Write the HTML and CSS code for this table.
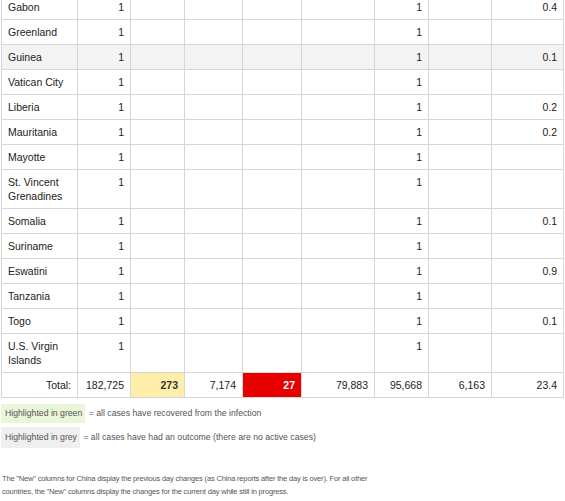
FILE: index.html
```html
<!DOCTYPE html>
<html>
<head>
<meta charset="utf-8">
<link rel="stylesheet" href="styles.css">
</head>
<body>
<table class="stats">
  <colgroup>
    <col class="c-name"><col class="c-total"><col class="c-new"><col class="c-deaths"><col class="c-newd"><col class="c-rec"><col class="c-act"><col class="c-ser"><col class="c-pm">
  </colgroup>
  <tbody>
    <tr><td class="name">Gabon</td><td>1</td><td></td><td></td><td></td><td></td><td>1</td><td></td><td>0.4</td></tr>
    <tr><td class="name">Greenland</td><td>1</td><td></td><td></td><td></td><td></td><td>1</td><td></td><td></td></tr>
    <tr class="grey"><td class="name">Guinea</td><td>1</td><td></td><td></td><td></td><td></td><td>1</td><td></td><td>0.1</td></tr>
    <tr><td class="name">Vatican City</td><td>1</td><td></td><td></td><td></td><td></td><td>1</td><td></td><td></td></tr>
    <tr><td class="name">Liberia</td><td>1</td><td></td><td></td><td></td><td></td><td>1</td><td></td><td>0.2</td></tr>
    <tr><td class="name">Mauritania</td><td>1</td><td></td><td></td><td></td><td></td><td>1</td><td></td><td>0.2</td></tr>
    <tr><td class="name">Mayotte</td><td>1</td><td></td><td></td><td></td><td></td><td>1</td><td></td><td></td></tr>
    <tr><td class="name">St. Vincent Grenadines</td><td>1</td><td></td><td></td><td></td><td></td><td>1</td><td></td><td></td></tr>
    <tr><td class="name">Somalia</td><td>1</td><td></td><td></td><td></td><td></td><td>1</td><td></td><td>0.1</td></tr>
    <tr><td class="name">Suriname</td><td>1</td><td></td><td></td><td></td><td></td><td>1</td><td></td><td></td></tr>
    <tr><td class="name">Eswatini</td><td>1</td><td></td><td></td><td></td><td></td><td>1</td><td></td><td>0.9</td></tr>
    <tr><td class="name">Tanzania</td><td>1</td><td></td><td></td><td></td><td></td><td>1</td><td></td><td></td></tr>
    <tr><td class="name">Togo</td><td>1</td><td></td><td></td><td></td><td></td><td>1</td><td></td><td>0.1</td></tr>
    <tr><td class="name">U.S. Virgin Islands</td><td>1</td><td></td><td></td><td></td><td></td><td>1</td><td></td><td></td></tr>
  </tbody>
  <tfoot>
    <tr class="total"><td class="label">Total:</td><td>182,725</td><td class="new-cases">273</td><td>7,174</td><td class="new-deaths">27</td><td>79,883</td><td>95,668</td><td>6,163</td><td>23.4</td></tr>
  </tfoot>
</table>

<div class="legend">
  <p class="legend-row"><span class="chip chip-green">Highlighted in green</span> = all cases have recovered from the infection</p>
  <p class="legend-row"><span class="chip chip-grey">Highlighted in grey</span> = all cases have had an outcome (there are no active cases)</p>
</div>

<p class="note">The "New" columns for China display the previous day changes (as China reports after the day is over). For all other countries, the "New" columns display the changes for the current day while still in progress.</p>
</body>
</html>
```

FILE: styles.css
```css
html, body {
  margin: 0;
  padding: 0;
  background: #ffffff;
}

body {
  font-family: "Liberation Sans", Arial, sans-serif;
  color: #333333;
  overflow: hidden;
}

.stats {
  border-collapse: collapse;
  table-layout: fixed;
  width: 563px;
  margin: -6px 0 0 1px;
  font-size: 10.5px;
  line-height: 14px;
  color: #222222;
}

.c-name { width: 76px; }
.c-total { width: 53px; }
.c-new { width: 54px; }
.c-deaths { width: 58px; }
.c-newd { width: 59px; }
.c-rec { width: 73px; }
.c-act { width: 54px; }
.c-ser { width: 63px; }
.c-pm { width: 72px; }

.stats td {
  border: 1px solid #d6d6d6;
  padding: 5px 6px 5px 6px;
  text-align: right;
  vertical-align: top;
}

.stats td.name {
  text-align: left;
  color: #222222;
}

.stats tr.grey td {
  background: #f3f3f3;
}

.stats tr.total td {
  vertical-align: middle;
}

.stats td.label {
  text-align: right;
}

.stats td.new-cases {
  background: #ffeeaa;
  font-weight: bold;
  color: #333333;
}

.stats td.new-deaths {
  background: #e60000;
  color: #ffffff;
  font-weight: bold;
}

.legend {
  margin-top: 6px;
  font-size: 8.7px;
  color: #555555;
}

.legend-row {
  margin: 0 0 4px 0;
  line-height: 11px;
}

.chip {
  display: inline-block;
  padding: 4px 3px 4px 4px;
  margin-left: 1px;
  margin-right: 1px;
}

.chip-green {
  background: #eaf6d8;
}

.chip-grey {
  background: #efefef;
  padding-top: 5px;
  padding-bottom: 5px;
}

.note {
  margin: 24px 0 0 2px;
  width: 370px;
  font-size: 7.5px;
  letter-spacing: -0.17px;
  line-height: 13px;
  color: #555555;
}
```
